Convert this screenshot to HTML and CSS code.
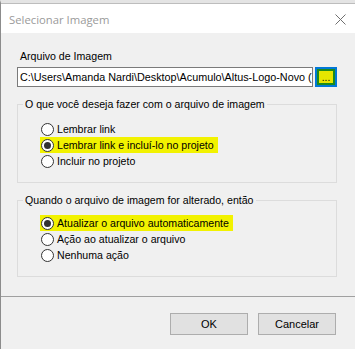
FILE: index.html
```html
<!DOCTYPE html>
<html lang="pt">
  <head>
    <meta charset="UTF-8" />
    <meta name="viewport" content="width=device-width, initial-scale=1.0" />
    <title>Selecionar Imagem</title>
    <link rel="stylesheet" href="styles.css">
  </head>
  <body>
    <div class="window">
      <div class="titlebar">
        <span class="title">Selecionar Imagem</span>
        <svg class="close" width="11" height="11" viewBox="0 0 11 11">
          <path d="M0.5 0.5 L10.5 10.5 M10.5 0.5 L0.5 10.5" stroke="#6f6f6f" stroke-width="1" fill="none" />
        </svg>
      </div>

      <div class="content">
        <div class="file-label">Arquivo de Imagem</div>
        <div class="file-row">
          <div class="file-input">C:\Users\Amanda Nardi\Desktop\Acumulo\Altus-Logo-Novo (</div>
          <div class="browse"><span>...</span></div>
        </div>

        <fieldset class="group">
          <legend>O que você deseja fazer com o arquivo de imagem</legend>
          <div class="option"><span class="radio"></span>Lembrar link</div>
          <div class="option marked"><span class="radio checked"></span>Lembrar link e incluí-lo no projeto</div>
          <div class="option"><span class="radio"></span>Incluir no projeto</div>
        </fieldset>

        <fieldset class="group second">
          <legend>Quando o arquivo de imagem for alterado, então</legend>
          <div class="option marked"><span class="radio checked"></span>Atualizar o arquivo automaticamente</div>
          <div class="option"><span class="radio"></span>Ação ao atualizar o arquivo</div>
          <div class="option"><span class="radio"></span>Nenhuma ação</div>
        </fieldset>
      </div>

      <div class="footer">
        <button class="btn">OK</button>
        <button class="btn">Cancelar</button>
      </div>
    </div>
  </body>
</html>
```

FILE: styles.css
```css
* {
  margin: 0;
  padding: 0;
  box-sizing: border-box;
}

body {
  width: 355px;
  height: 349px;
  overflow: hidden;
  background: #f0f0f0;
  font-family: "Liberation Sans", Arial, sans-serif;
  font-size: 10.6px;
  color: #000;
}

.window {
  width: 355px;
  height: 349px;
  border-left: 1px solid #8c8c8c;
  border-top: 3px solid #e4e4e4;
  background: #f0f0f0;
  position: relative;
}

.titlebar {
  height: 30px;
  background: #fff;
  display: flex;
  align-items: center;
  justify-content: space-between;
  padding: 0 9px 0 8px;
  border-top: 1px solid #bdbdbd;
}
.title {
  font-family: "Open Sans", "Noto Sans", sans-serif;
  font-size: 11.3px;
  color: #9a9a9a;
  margin-top: 1px;
}
.close {
  margin-top: 1px;
}

.content {
  padding: 17px 18px 0 16px;
}

.file-label {
  padding-left: 3px;
  height: 13px;
  line-height: 13px;
  margin-bottom: 4px;
}

.file-row {
  display: flex;
  gap: 2px;
  height: 20px;
}
.file-input {
  width: 296px;
  height: 20px;
  border: 1px solid #7a7a7a;
  background: #fff;
  padding-left: 2px;
  line-height: 18px;
  font-size: 10.8px;
  white-space: nowrap;
  overflow: hidden;
}
.browse {
  width: 22px;
  height: 20px;
  border: 1px solid #0078d7;
  background: #0078d7;
  padding: 1px;
}
.browse span {
  display: block;
  height: 100%;
  border: 2px solid #1c8a1c;
  background: #e6e600;
  text-align: center;
  line-height: 14px;
  font-size: 10px;
  overflow: hidden;
}

.group {
  border: 1px solid #dcdcdc;
  margin-top: 10px;
  padding: 10px 0 13px 5px;
  width: 320px;
}
.group.second {
  padding-top: 8px;
}
.group legend {
  padding: 0 2px;
  line-height: 14px;
}

.option {
  height: 16px;
  display: flex;
  align-items: center;
  line-height: 16px;
  width: max-content;
  margin-left: 18px;
  padding-right: 4px;
}
.option.marked {
  background: #f2f200;
  margin-left: 17px;
  padding-left: 1px;
}

.radio {
  width: 13px;
  height: 13px;
  border: 1px solid #333;
  border-radius: 50%;
  background: #fff;
  margin-right: 3px;
  display: flex;
  align-items: center;
  justify-content: center;
  flex-shrink: 0;
}
.radio.checked::after {
  content: "";
  width: 7px;
  height: 7px;
  border-radius: 50%;
  background: #333;
}

.footer {
  position: absolute;
  left: 0;
  right: 0;
  top: 293px;
  height: 53px;
  border-top: 1px solid #a0a0a0;
  display: flex;
  justify-content: flex-end;
  gap: 10px;
  padding: 16px 19px 0 0;
}
.btn {
  width: 78px;
  height: 22px;
  border: 1px solid #adadad;
  background: #e1e1e1;
  font-family: "Liberation Sans", Arial, sans-serif;
  font-size: 11px;
  color: #000;
}
```
